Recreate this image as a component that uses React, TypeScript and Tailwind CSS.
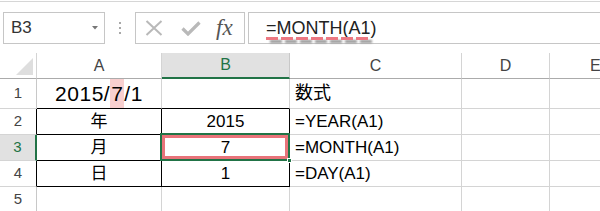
import React from "react";

const sans = { fontFamily: '"Liberation Sans", Arial, "Noto Sans CJK JP", sans-serif' };

function Dashes() {
  const xs = [0, 15, 30, 45, 60, 75, 90];
  return (
    <svg className="absolute left-0 top-[17px]" width="120" height="12" viewBox="0 0 120 12">
      <defs>
        <filter id="bl" x="-10%" y="-100%" width="120%" height="300%">
          <feGaussianBlur stdDeviation="1" />
        </filter>
      </defs>
      <g filter="url(#bl)" fill="#7a7a7a" opacity="0.8">
        {xs.map((x) => (
          <rect key={"s" + x} x={x + 4} y={4} width={12} height={3} />
        ))}
      </g>
      <g fill="#ec7882">
        {xs.map((x) => (
          <rect key={x} x={x} y={1} width={12} height={3} />
        ))}
      </g>
    </svg>
  );
}

export default function App() {
  return (
    <div className="w-[600px] h-[211px] overflow-hidden bg-white" style={sans}>
      <div className="h-px mt-px bg-[#d6d6d6]" />
      {/* formula toolbar */}
      <div className="flex h-[32px] mt-[10px]">
        <div className="ml-[3px] w-[102px] border border-[#c6c6c6] flex items-center justify-between pl-[7px] pr-[6px]">
          <span className="text-[17px] text-[#333]">B3</span>
          <svg width="6" height="4" viewBox="0 0 6 4">
            <path d="M0 0 H6 L3 3.5 Z" fill="#777" />
          </svg>
        </div>
        <div className="w-[30px] flex flex-col items-center justify-center gap-[3px]">
          <div className="w-[2px] h-[2px] bg-[#a8a8a8]" />
          <div className="w-[2px] h-[2px] bg-[#a8a8a8]" />
          <div className="w-[2px] h-[2px] bg-[#a8a8a8]" />
        </div>
        <div className="w-[110px] border border-[#c6c6c6] flex items-center pl-[9px]">
          <svg width="18" height="16" viewBox="0 0 18 16">
            <path d="M1.5 1 L16.5 15 M16.5 1 L1.5 15" stroke="#b9b9b9" strokeWidth="2" fill="none" />
          </svg>
          <svg className="ml-[18px]" width="20" height="15" viewBox="0 0 20 15">
            <path d="M1.5 7.5 L7 13 L18.5 1.5" stroke="#b9b9b9" strokeWidth="3.2" fill="none" />
          </svg>
          <span
            className="ml-[15px] text-[23px] italic text-[#555] leading-none -mt-[2px]"
            style={{ fontFamily: '"Liberation Serif", "Times New Roman", serif' }}
          >
            fx
          </span>
        </div>
        <div className="ml-[3px] flex-1 border border-r-0 border-[#c6c6c6] flex items-center pl-[17px]">
          <span className="relative text-[18px] text-[#222] leading-none">
            =MONTH(A1)
            <Dashes />
          </span>
        </div>
      </div>
      <div className="h-[9px]" />
      {/* grid */}
      <div className="grid grid-cols-[37px_125px_128px_172px_88px_50px] grid-rows-[26px_30px_26px_26px_26px_26px] text-[#000]">
        {/* header row */}
        <div className="relative border-r border-b border-r-[#d4d4d4] border-b-[#ababab]">
          <svg className="absolute right-[3px] bottom-[3px]" width="17" height="17" viewBox="0 0 17 17">
            <path d="M0 17 L17 0 L17 17 Z" fill="#dedede" />
          </svg>
        </div>
        <div className="border-r border-b border-r-[#d4d4d4] border-b-[#ababab] flex items-center justify-center text-[16px] text-[#444]">A</div>
        <div className="border-b-2 border-b-[#217346] bg-[#e1e1e1] border-r border-r-[#c8c8c8] flex items-center justify-center text-[16px] text-[#217346]">B</div>
        <div className="border-r border-b border-r-[#d4d4d4] border-b-[#ababab] flex items-center justify-center text-[16px] text-[#444]">C</div>
        <div className="border-r border-b border-r-[#d4d4d4] border-b-[#ababab] flex items-center justify-center text-[16px] text-[#444]">D</div>
        <div className="border-b border-b-[#ababab] flex items-center pl-[40px] text-[16px] text-[#444]">E</div>

        {/* row 1 */}
        <div className="border-r border-b border-r-[#c8c8c8] border-b-[#d4d4d4] flex items-center justify-center text-[15px] text-[#444]">1</div>
        <div className="border-r border-b border-r-[#d4d4d4] border-b-black flex justify-center text-[21px] tracking-[0.5px]">
          <span className="flex items-center">2015/</span>
          <span className="flex items-center bg-[#f8cfcf] px-[1px]">7</span>
          <span className="flex items-center">/1</span>
        </div>
        <div className="border-r border-b border-r-[#d4d4d4] border-b-black" />
        <div className="border-r border-b border-[#d4d4d4] flex items-center pl-[5px] text-[18px]">数式</div>
        <div className="border-r border-b border-[#d4d4d4]" />
        <div className="border-b border-[#d4d4d4]" />

        {/* row 2 */}
        <div className="border-r border-b border-r-black border-b-[#d4d4d4] flex items-center justify-center text-[15px] text-[#444]">2</div>
        <div className="border-r border-b border-black flex items-center justify-center text-[17px]">年</div>
        <div className="border-r border-b border-black flex items-center justify-center text-[17px]">2015</div>
        <div className="border-r border-b border-[#d4d4d4] flex items-center pl-[5px] text-[17px]">=YEAR(A1)</div>
        <div className="border-r border-b border-[#d4d4d4]" />
        <div className="border-b border-[#d4d4d4]" />

        {/* row 3 */}
        <div className="border-r-2 border-b border-r-[#217346] border-b-[#d4d4d4] bg-[#e1e1e1] flex items-center justify-center text-[15px] text-[#217346]">3</div>
        <div className="border-r border-b border-black flex items-center justify-center text-[17px]">月</div>
        <div className="relative border-r border-b border-black flex items-center justify-center text-[17px]">
          7
          <div className="absolute -left-[2px] -top-[2px] -right-px -bottom-px border-2 border-[#217346]">
            <div className="absolute inset-0 border-[3px] border-[#e8737a]" />
          </div>
          <div className="absolute -right-[3px] -bottom-[3px] w-[5px] h-[5px] bg-[#217346] border border-white" />
        </div>
        <div className="border-r border-b border-[#d4d4d4] flex items-center pl-[5px] text-[17px]">=MONTH(A1)</div>
        <div className="border-r border-b border-[#d4d4d4]" />
        <div className="border-b border-[#d4d4d4]" />

        {/* row 4 */}
        <div className="border-r border-b border-r-black border-b-[#d4d4d4] flex items-center justify-center text-[15px] text-[#444]">4</div>
        <div className="border-r border-b border-black flex items-center justify-center text-[17px]">日</div>
        <div className="border-r border-b border-black flex items-center justify-center text-[17px]">1</div>
        <div className="border-r border-b border-[#d4d4d4] flex items-center pl-[5px] text-[17px]">=DAY(A1)</div>
        <div className="border-r border-b border-[#d4d4d4]" />
        <div className="border-b border-[#d4d4d4]" />

        {/* row 5 */}
        <div className="border-r border-b border-r-[#c8c8c8] border-b-[#d4d4d4] flex items-center justify-center text-[15px] text-[#444]">5</div>
        <div className="border-r border-b border-[#d4d4d4]" />
        <div className="border-r border-b border-[#d4d4d4]" />
        <div className="border-r border-b border-[#d4d4d4]" />
        <div className="border-r border-b border-[#d4d4d4]" />
        <div className="border-b border-[#d4d4d4]" />
      </div>
    </div>
  );
}
